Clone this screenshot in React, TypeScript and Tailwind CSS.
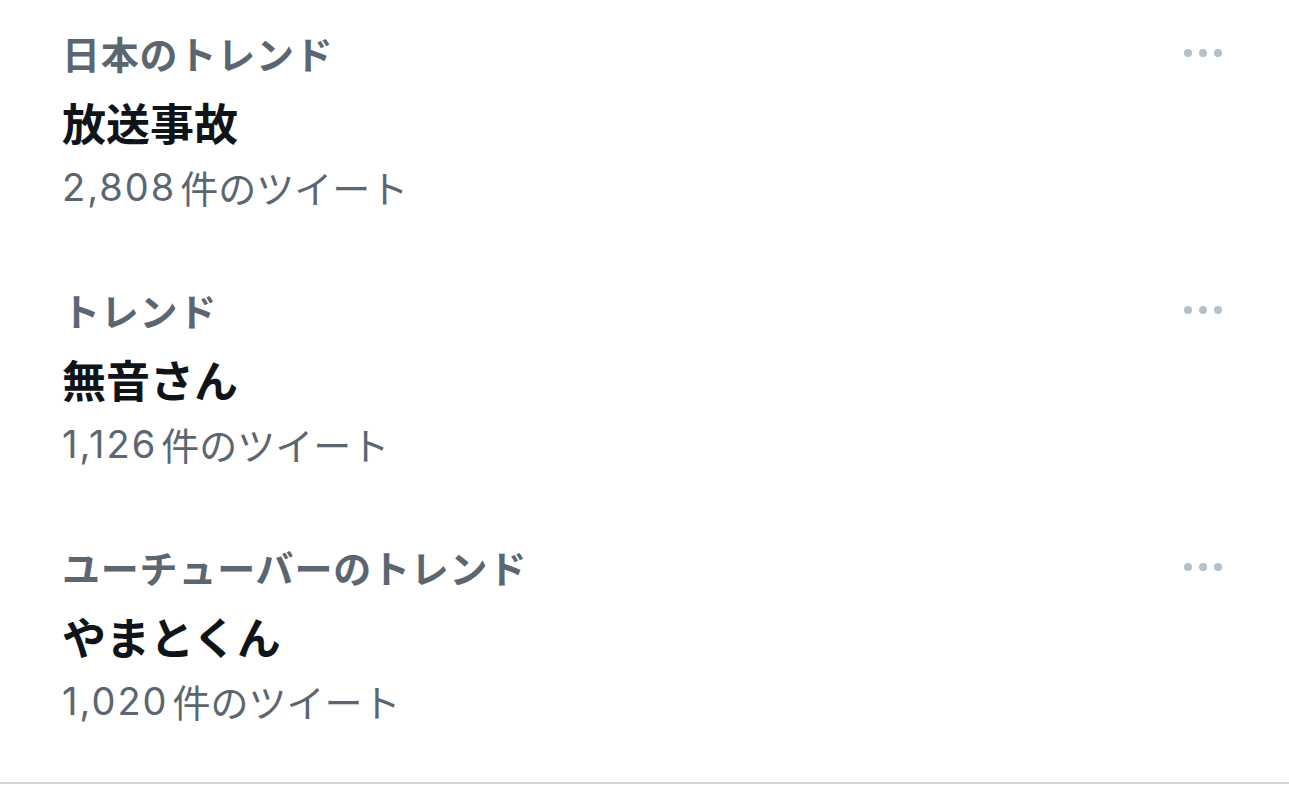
import React from "react";

interface Trend {
  category: string;
  name: string;
  count: string;
}

const trends: Trend[] = [
  { category: "日本のトレンド", name: "放送事故", count: "2,808" },
  { category: "トレンド", name: "無音さん", count: "1,126" },
  { category: "ユーチューバーのトレンド", name: "やまとくん", count: "1,020" },
];

function MoreDots() {
  return (
    <div className="flex items-center gap-[7px] h-[66px]">
      <span className="w-[8px] h-[8px] rounded-full bg-[#b4c0ca]" />
      <span className="w-[8px] h-[8px] rounded-full bg-[#b4c0ca]" />
      <span className="w-[8px] h-[8px] rounded-full bg-[#b4c0ca]" />
    </div>
  );
}

function TrendRow({ trend, last }: { trend: Trend; last: boolean }) {
  return (
    <div className={`flex justify-between pl-[62px] pr-[67px] ${last ? "pb-[52px]" : "pb-[61px]"}`}>
      <div className="flex flex-col">
        <div className="text-[38px] leading-[66px] font-bold text-[#5b6670] tracking-[0.8px]">{trend.category}</div>
        <div className="text-[44px] leading-[72px] font-bold text-[#0f1419]">{trend.name}</div>
        <div className="flex items-center h-[58px] text-[38px] leading-[58px] text-[#5b6670]">
          <span className="font-[Inter] tracking-[2px] leading-[58px]">{trend.count}</span>
          <span className="ml-[4px] leading-[58px]">件のツイート</span>
        </div>
      </div>
      <MoreDots />
    </div>
  );
}

export default function App() {
  return (
    <div
      className="w-[1289px] h-[796px] bg-white overflow-hidden"
      style={{ fontFamily: '"Noto Sans CJK JP", "Noto Sans", sans-serif' }}
    >
      <div className="pt-[20px] border-b-2 border-[#d6d6d6]">
        {trends.map((t, i) => (
          <TrendRow key={t.name} trend={t} last={i === trends.length - 1} />
        ))}
      </div>
    </div>
  );
}
